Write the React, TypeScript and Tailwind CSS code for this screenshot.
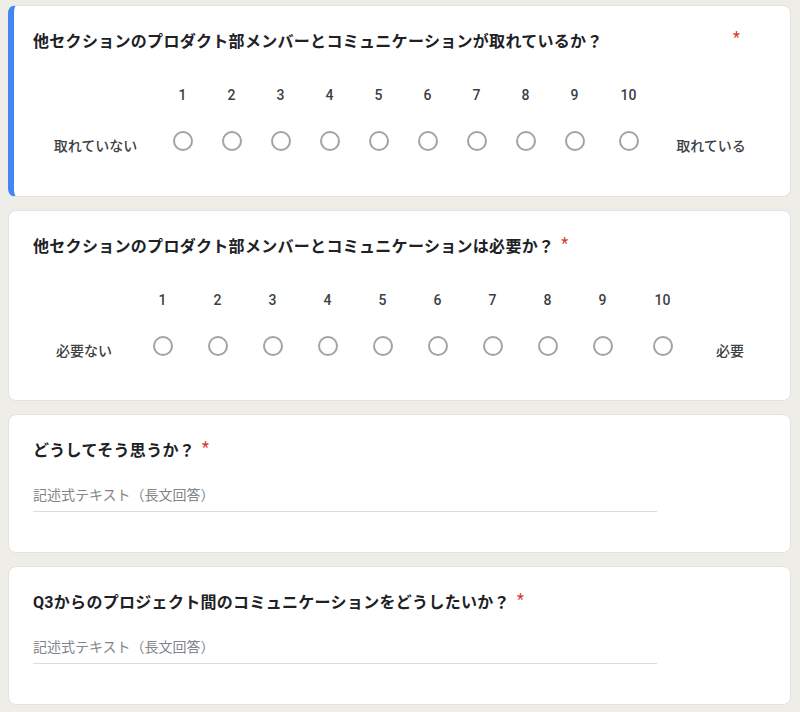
const JP = "font-['Roboto','Noto_Sans_CJK_JP',sans-serif]";

const SCALE = [1, 2, 3, 4, 5, 6, 7, 8, 9, 10];

function Asterisk({ className = "" }: { className?: string }) {
  return <span className={`text-[16px] leading-6 text-[#d93025] ${className}`}>*</span>;
}

function Radio() {
  return <span className="block h-5 w-5 rounded-full border-2 border-[#a3a3a3] bg-white" />;
}

interface ScaleQuestionProps {
  title: string;
  low: string;
  high: string;
  cols: string;
  active?: boolean;
  farAsterisk?: boolean;
}

function ScaleQuestion({ title, low, high, cols, active, farAsterisk }: ScaleQuestionProps) {
  return (
    <section
      className={`rounded-lg bg-white pr-6 pt-6 ${
        active
          ? "border border-l-[6px] border-[#e3e2dc] border-l-[#4285f4] pb-[33px] pl-[19px]"
          : "border border-[#e3e2dc] pb-[32px] pl-6"
      }`}
    >
      <div className="flex items-start">
        <h2 className="text-[16px] font-bold leading-6 tracking-[0.3px] text-[#202124]">{title}</h2>
        {farAsterisk ? <Asterisk className="ml-auto mr-[26px] -mt-1" /> : <Asterisk className="ml-[7px] -mt-[3px]" />}
      </div>
      {/* last number column is wider, like the auto-sized table in the form */}
      <div className={`mt-[29px] grid grid-rows-[24px_44px] gap-y-3 ${cols}`}>
        <span />
        {SCALE.map((n) => (
          <span key={n} className="flex items-center justify-center text-[14px] font-medium text-[#3c4043]">
            {n}
          </span>
        ))}
        <span />
        <span className="flex items-center justify-center pt-[10px] text-[14px] font-medium text-[#3c4043]">{low}</span>
        {SCALE.map((n) => (
          <span key={n} className="flex items-center justify-center">
            <Radio />
          </span>
        ))}
        <span className="flex items-center justify-center pt-[10px] text-[14px] font-medium text-[#3c4043]">{high}</span>
      </div>
    </section>
  );
}

function TextQuestion({ title }: { title: string }) {
  return (
    <section className="rounded-lg border border-[#e3e2dc] bg-white px-6 pb-10 pt-6">
      <div className="flex items-start">
        <h2 className="text-[16px] font-bold leading-6 tracking-[0.3px] text-[#202124]">{title}</h2>
        <Asterisk className="ml-[7px] -mt-[3px]" />
      </div>
      <div className="mt-5 w-[624px] border-b border-[#dadce0] pb-1 text-[14px] leading-6 text-[#80868b]">
        記述式テキスト（長文回答）
      </div>
    </section>
  );
}

export default function App() {
  return (
    <div className={`min-h-screen bg-[#eeede8] pl-2 pr-[9px] pt-[5px] ${JP}`}>
      <div className="flex flex-col gap-[13px]">
        <ScaleQuestion
          active
          farAsterisk
          title="他セクションのプロダクト部メンバーとコミュニケーションが取れているか？"
          low="取れていない"
          high="取れている"
          cols="grid-cols-[125px_repeat(9,49px)_59px_106px]"
        />
        <ScaleQuestion
          title="他セクションのプロダクト部メンバーとコミュニケーションは必要か？"
          low="必要ない"
          high="必要"
          cols="grid-cols-[102px_repeat(9,55px)_65px_70px]"
        />
        <TextQuestion title="どうしてそう思うか？" />
        <TextQuestion title="Q3からのプロジェクト間のコミュニケーションをどうしたいか？" />
      </div>
    </div>
  );
}
